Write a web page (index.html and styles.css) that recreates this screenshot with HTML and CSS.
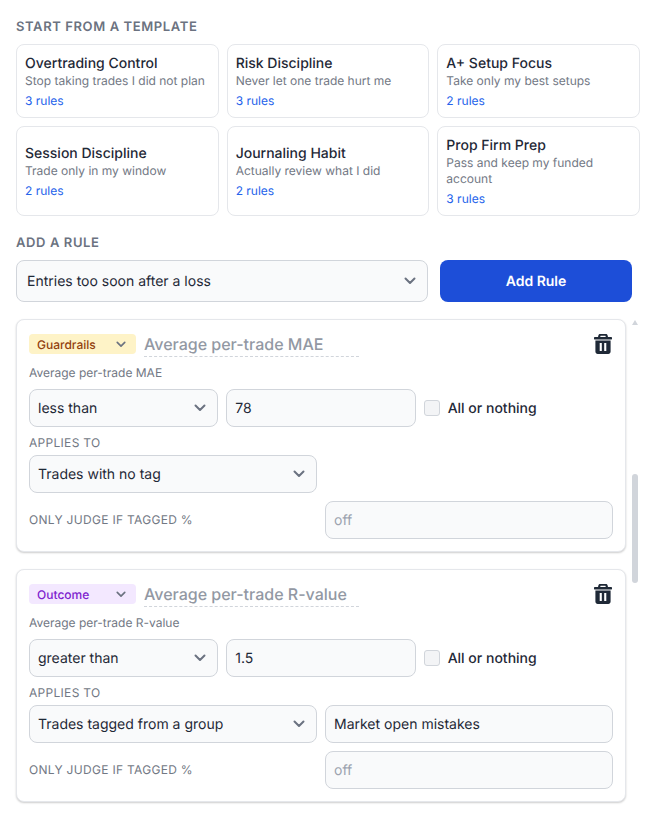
FILE: index.html
```html
<!DOCTYPE html>
<html lang="en">
<head>
    <meta charset="UTF-8">
    <meta name="viewport" content="width=device-width, initial-scale=1.0">
    <title>Rules</title>
    <link rel="stylesheet" href="styles.css">
</head>
<body>
    <h2 class="section-label">Start from a template</h2>
    <div class="templates">
        <button class="template">
            <span class="template-name">Overtrading Control</span>
            <span class="template-desc">Stop taking trades I did not plan</span>
            <span class="template-count">3 rules</span>
        </button>
        <button class="template">
            <span class="template-name">Risk Discipline</span>
            <span class="template-desc">Never let one trade hurt me</span>
            <span class="template-count">3 rules</span>
        </button>
        <button class="template">
            <span class="template-name">A+ Setup Focus</span>
            <span class="template-desc">Take only my best setups</span>
            <span class="template-count">2 rules</span>
        </button>
        <button class="template">
            <span class="template-name">Session Discipline</span>
            <span class="template-desc">Trade only in my window</span>
            <span class="template-count">2 rules</span>
        </button>
        <button class="template">
            <span class="template-name">Journaling Habit</span>
            <span class="template-desc">Actually review what I did</span>
            <span class="template-count">2 rules</span>
        </button>
        <button class="template">
            <span class="template-name">Prop Firm Prep</span>
            <span class="template-desc">Pass and keep my funded account</span>
            <span class="template-count">3 rules</span>
        </button>
    </div>

    <h2 class="section-label add-label">Add a rule</h2>
    <div class="add-row">
        <select class="field add-select">
            <option>Entries too soon after a loss</option>
        </select>
        <button class="add-button">Add Rule</button>
    </div>

    <div class="rules-area">
        <div class="rules">
            <div class="rule">
                <div class="rule-head">
                    <select class="pill pill-guardrails"><option>Guardrails</option></select>
                    <input class="rule-title" type="text" placeholder="Average per-trade MAE">
                    <svg class="trash" viewBox="0 0 18 20"><path d="M6 0h6c.7 0 1.300.5 1.500 1.100l.5 1.900h3c.6 0 1 .4 1 1v1c0 .3-.2.5-.5.5H.5C.2 5.500 0 5.300 0 5V4c0-.6.4-1 1-1h3l.5-1.900C4.700.5 5.300 0 6 0zM6.200 3h5.600l-.3-1.100c0-.1-.1-.2-.3-.2H6.800c-.2 0-.3.1-.3.2z" fill="#1f2937"/><path fill-rule="evenodd" d="M1.400 6.500h15.200v11.100c0 1.300-1 2.400-2.300 2.400H3.700c-1.300 0-2.300-1.100-2.300-2.400zM5.700 9v8h2.100V9zM10.200 9v8h2.100V9z" fill="#1f2937"/></svg>
                </div>
                <div class="rule-sub">Average per-trade MAE</div>
                <div class="rule-main">
                    <select class="field"><option>less than</option></select>
                    <input class="field" type="text" value="78">
                    <label class="check"><input type="checkbox"> All or nothing</label>
                </div>
                <div class="rule-label">Applies to</div>
                <div class="rule-pair">
                    <select class="field"><option>Trades with no tag</option></select>
                </div>
                <div class="rule-pair rule-last">
                    <div class="rule-label-inline">Only judge if tagged %</div>
                    <input class="field" type="text" placeholder="off">
                </div>
            </div>

            <div class="rule">
                <div class="rule-head">
                    <select class="pill pill-outcome"><option>Outcome</option></select>
                    <input class="rule-title" type="text" placeholder="Average per-trade R-value">
                    <svg class="trash" viewBox="0 0 18 20"><path d="M6 0h6c.7 0 1.300.5 1.500 1.100l.5 1.900h3c.6 0 1 .4 1 1v1c0 .3-.2.5-.5.5H.5C.2 5.500 0 5.300 0 5V4c0-.6.4-1 1-1h3l.5-1.900C4.700.5 5.300 0 6 0zM6.200 3h5.600l-.3-1.100c0-.1-.1-.2-.3-.2H6.800c-.2 0-.3.1-.3.2z" fill="#1f2937"/><path fill-rule="evenodd" d="M1.400 6.500h15.200v11.100c0 1.300-1 2.400-2.300 2.400H3.700c-1.300 0-2.300-1.100-2.300-2.400zM5.700 9v8h2.100V9zM10.200 9v8h2.100V9z" fill="#1f2937"/></svg>
                </div>
                <div class="rule-sub">Average per-trade R-value</div>
                <div class="rule-main">
                    <select class="field"><option>greater than</option></select>
                    <input class="field" type="text" value="1.5">
                    <label class="check"><input type="checkbox"> All or nothing</label>
                </div>
                <div class="rule-label">Applies to</div>
                <div class="rule-pair">
                    <select class="field"><option>Trades tagged from a group</option></select>
                    <input class="field" type="text" value="Market open mistakes">
                </div>
                <div class="rule-pair rule-last">
                    <div class="rule-label-inline">Only judge if tagged %</div>
                    <input class="field" type="text" placeholder="off">
                </div>
            </div>
        </div>

        <div class="scrollbar">
            <div class="scroll-arrow"></div>
            <div class="scroll-thumb"></div>
        </div>
    </div>
</body>
</html>
```

FILE: styles.css
```css
* {
    margin: 0;
    padding: 0;
    box-sizing: border-box;
    font-family: 'Inter', sans-serif;
    text-rendering: geometricPrecision;
}

html, body {
    height: 100%;
    overflow: hidden;
}

body {
    background: #fff;
    padding: 19px 16px 0;
    color: #1f2937;
}

.section-label {
    font-size: 13px;
    line-height: 16px;
    font-weight: 600;
    letter-spacing: 0.6px;
    text-transform: uppercase;
    color: #6b7280;
}

.templates {
    display: grid;
    grid-template-columns: repeat(3, 1fr);
    gap: 8px;
    margin-top: 9px;
}

.template {
    display: flex;
    flex-direction: column;
    justify-content: center;
    padding: 8px;
    background: #fff;
    border: 1px solid #e5e7eb;
    border-radius: 8px;
    text-align: left;
}

.template span {
    display: block;
}

.template-name {
    padding-top: 1px;
    margin-bottom: -1px;
    font-size: 14px;
    line-height: 20px;
    font-weight: 500;
    color: #1f2937;
}

.template-desc {
    font-size: 12px;
    line-height: 16px;
    color: #727884;
}

.template-count {
    margin-top: 4px;
    font-size: 12px;
    line-height: 16px;
    color: #2563eb;
}

.add-label {
    margin-top: 19px;
}

.add-row {
    display: flex;
    gap: 12px;
    margin-top: 9px;
    width: 616px;
}

.field {
    width: 100%;
    height: 38px;
    padding: 0 8px;
    font-size: 14px;
    color: #1f2937;
    background-color: #f9fafb;
    border: 1px solid #d1d5db;
    border-radius: 8px;
    outline: none;
}

.field::placeholder {
    color: #9ca3af;
}

select.field, .pill {
    appearance: none;
    background-repeat: no-repeat;
    background-image: url("data:image/svg+xml,%3Csvg xmlns='http://www.w3.org/2000/svg' viewBox='0 0 12 8'%3E%3Cpath d='M1.500 1.500 6 6l4.500-4.500' fill='none' stroke='%236b7280' stroke-width='2' stroke-linecap='round' stroke-linejoin='round'/%3E%3C/svg%3E");
}

select.field {
    background-position: right 11px center;
    background-size: 12px 8px;
}

.add-select {
    flex: 1;
    height: 42px;
    min-width: 0;
    padding-left: 10px;
}

.add-button {
    width: 192px;
    height: 42px;
    font-size: 14px;
    font-weight: 600;
    color: #fff;
    background: #1d4ed8;
    border: none;
    border-radius: 8px;
}

.rules-area {
    display: flex;
    gap: 6px;
    margin-top: 17px;
}

.rules {
    width: 610px;
    display: flex;
    flex-direction: column;
    gap: 17px;
}

.rule {
    height: 233px;
    padding: 12px;
    background: #fff;
    border: 1px solid #e5e7eb;
    border-radius: 8px;
    box-shadow: 0 1px 2px rgba(0, 0, 0, 0.2);
}

.rule-head {
    display: flex;
    align-items: flex-start;
    gap: 8px;
    height: 25px;
}

.pill {
    width: 107px;
    height: 20px;
    margin-top: 2px;
    padding: 0 8px;
    font-size: 12px;
    font-weight: 500;
    border: none;
    border-radius: 4px;
    background-position: right 10px center;
    background-size: 10px 7px;
}

.pill-guardrails {
    color: #92400e;
    background-color: #fef3c7;
}

.pill-outcome {
    color: #7e22ce;
    background-color: #f3e8ff;
}

.rule-title {
    width: 215px;
    height: 25px;
    font-size: 16px;
    font-weight: 500;
    color: #1f2937;
    border: none;
    border-bottom: 1px dashed #d1d5db;
    background: transparent;
    outline: none;
}

.rule-title::placeholder {
    color: #9298a3;
}

.trash {
    width: 18px;
    height: 20px;
    margin-top: 2px;
    margin-left: auto;
    margin-right: 1px;
}

.rule-sub {
    margin-top: 7px;
    padding-top: 1px;
    font-size: 12px;
    line-height: 16px;
    color: #727884;
}

.rule-main {
    display: grid;
    grid-template-columns: repeat(3, 1fr);
    gap: 8px;
    margin-top: 8px;
}

.check {
    display: flex;
    align-items: center;
    gap: 8px;
    font-size: 14px;
    font-weight: 500;
    color: #1f2937;
}

.check input {
    appearance: none;
    width: 16px;
    height: 16px;
    background: #f3f4f6;
    border: 1px solid #d1d5db;
    border-radius: 3px;
}

.rule-label {
    margin-top: 7px;
    padding-top: 1px;
    font-size: 12px;
    line-height: 16px;
    letter-spacing: 0.3px;
    text-transform: uppercase;
    color: #727884;
}

.rule-pair {
    display: grid;
    grid-template-columns: repeat(2, 1fr);
    gap: 8px;
    margin-top: 4px;
}

.rule-last {
    margin-top: 8px;
    align-items: center;
}

.rule-label-inline {
    font-size: 12px;
    line-height: 16px;
    letter-spacing: 0.3px;
    text-transform: uppercase;
    color: #727884;
}

.scrollbar {
    width: 6px;
    display: flex;
    flex-direction: column;
    align-items: center;
}

.scroll-arrow {
    margin-top: 1px;
    width: 0;
    height: 0;
    border-left: 3px solid transparent;
    border-right: 3px solid transparent;
    border-bottom: 5px solid #d1d5db;
}

.scroll-thumb {
    width: 6px;
    height: 109px;
    margin-top: 149px;
    background: #d1d5db;
    border-radius: 3px;
}
```
